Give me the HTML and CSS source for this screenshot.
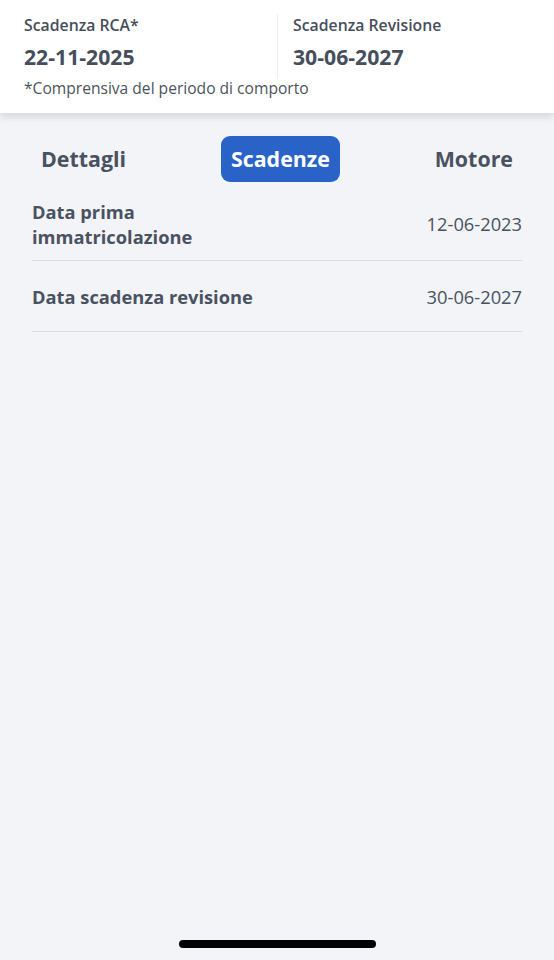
FILE: index.html
```html
<!DOCTYPE html>
<html lang="it">
<head>
<meta charset="utf-8">
<link rel="stylesheet" href="styles.css">
</head>
<body>
<div class="screen">
  <header class="summary">
    <div class="cols">
      <div class="col">
        <div class="label">Scadenza RCA*</div>
        <div class="value">22-11-2025</div>
      </div>
      <div class="col col-right">
        <div class="label">Scadenza Revisione</div>
        <div class="value">30-06-2027</div>
      </div>
    </div>
    <div class="note">*Comprensiva del periodo di comporto</div>
  </header>
  <nav class="tabs">
    <span class="tab">Dettagli</span>
    <span class="tab active">Scadenze</span>
    <span class="tab">Motore</span>
  </nav>
  <section class="list">
    <div class="row">
      <div class="key">Data prima<br>immatricolazione</div>
      <div class="val">12-06-2023</div>
    </div>
    <div class="row">
      <div class="key">Data scadenza revisione</div>
      <div class="val">30-06-2027</div>
    </div>
  </section>
  <div class="home"></div>
</div>
</body>
</html>
```
FILE: styles.css
```css
* { box-sizing: border-box; }
html, body { margin: 0; padding: 0; }
body {
  font-family: "Open Sans", "Noto Sans", sans-serif;
  background: #f2f4f8;
  color: #474e5b;
}
.screen {
  width: 554px;
  height: 960px;
  display: flex;
  flex-direction: column;
  position: relative;
}
.summary {
  background: #ffffff;
  padding: 14px 24px 16px;
  box-shadow: 0 4px 8px rgba(0, 0, 0, 0.12);
  height: 113px;
}
.cols {
  display: flex;
}
.col {
  flex: 0 0 253px;
}
.col-right {
  border-left: 1px solid #eceef1;
  padding-left: 15px;
}
.label {
  font-size: 15.8px;
  font-weight: 600;
  line-height: 22px;
}
.value {
  font-size: 21.2px;
  font-weight: 700;
  line-height: 28px;
  margin-top: 7px;
  margin-bottom: 7px;
}
.note {
  font-family: "Open Sans", "Noto Sans", sans-serif;
  font-size: 15.6px;
  line-height: 20px;
  color: #4d535c;
}
.tabs {
  display: flex;
  justify-content: space-between;
  align-items: center;
  padding: 23px 30px 0;
}
.tab {
  font-size: 21.4px;
  font-weight: 700;
  line-height: 46px;
  padding: 0 11px;
  border-radius: 9px;
  color: #4a5261;
}
.tab.active {
  background: #2963c8;
  color: #ffffff;
  padding: 0 10px;
}
.list {
  padding: 9px 32px 0;
}
.row {
  display: flex;
  justify-content: space-between;
  align-items: center;
  border-bottom: 1.5px solid #d9dde3;
  min-height: 71px;
  padding: 10px 0;
}
.row:first-child {
  min-height: 70px;
  padding: 6px 0 10px;
}
.key {
  font-size: 18.3px;
  font-weight: 700;
  line-height: 25px;
  color: #4a5261;
}
.val {
  font-size: 18.3px;
  font-weight: 400;
  color: #4a5261;
}
.home {
  position: absolute;
  left: 179px;
  top: 940px;
  width: 197px;
  height: 8px;
  border-radius: 4px;
  background: #000000;
}
```
